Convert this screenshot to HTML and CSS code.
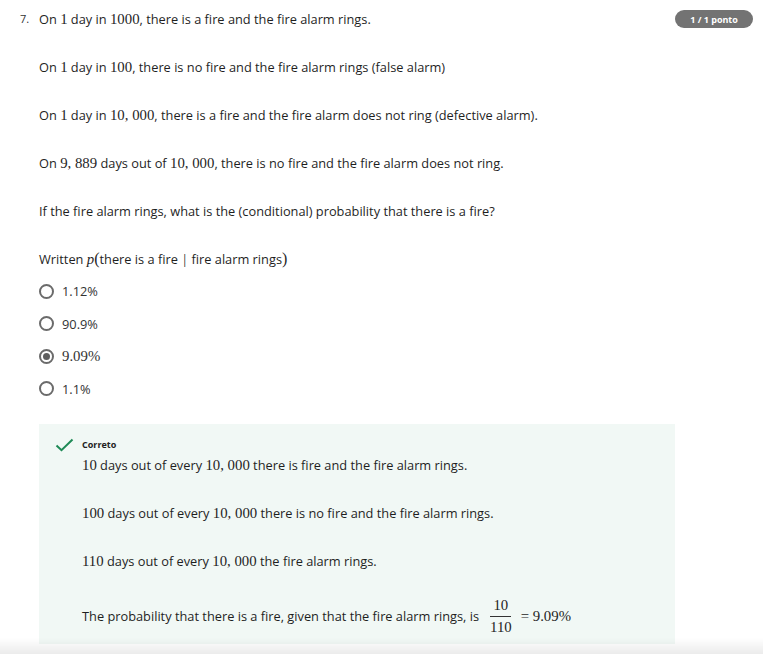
FILE: index.html
```html
<!DOCTYPE html>
<html lang="en">
<head>
<meta charset="utf-8">
<title>Question 7</title>
<link rel="stylesheet" href="styles.css">
</head>
<body>
<div class="question">
  <div class="num">7.</div>
  <div class="content">
    <p>On <span class="m">1</span> day in <span class="m">1000</span>, there is a fire and the fire alarm rings.</p>
    <p>On <span class="m">1</span> day in <span class="m">100</span>, there is no fire and the fire alarm rings (false alarm)</p>
    <p>On <span class="m">1</span> day in <span class="m">10, 000</span>, there is a fire and the fire alarm does not ring (defective alarm).</p>
    <p>On <span class="m">9, 889</span> days out of <span class="m">10, 000</span>, there is no fire and the fire alarm does not ring.</p>
    <p>If the fire alarm rings, what is the (conditional) probability that there is a fire?</p>
    <p class="last">Written <span class="m"><i>p</i><span class="paren">(</span></span>there is a fire <span class="m bar">|</span> fire alarm rings<span class="m paren">)</span></p>
    <div class="options">
      <label class="opt"><span class="radio"></span><span>1.12%</span></label>
      <label class="opt"><span class="radio"></span><span>90.9%</span></label>
      <label class="opt"><span class="radio checked"></span><span class="m">9.09%</span></label>
      <label class="opt"><span class="radio"></span><span>1.1%</span></label>
    </div>
    <div class="feedback">
      <div class="fb-head">
        <svg class="check" width="19" height="14" viewBox="0 0 19 14"><path d="M1.5 7.5 L6.5 12.2 L17.5 1.5" fill="none" stroke="#1e8a56" stroke-width="2"/></svg>
        <span class="fb-title">Correto</span>
      </div>
      <div class="fb-body">
        <p><span class="m">10</span> days out of every <span class="m">10, 000</span> there is fire and the fire alarm rings.</p>
        <p><span class="m">100</span> days out of every <span class="m">10, 000</span> there is no fire and the fire alarm rings.</p>
        <p><span class="m">110</span> days out of every <span class="m">10, 000</span> the fire alarm rings.</p>
        <p class="final">The probability that there is a fire, given that the fire alarm rings, is <span class="frac m"><span class="numr">10</span><span class="den">110</span></span><span class="m eq">= 9.09%</span></p>
      </div>
    </div>
  </div>
  <div class="badge">1 / 1 ponto</div>
</div>
<div class="fade"></div>
</body>
</html>
```

FILE: styles.css
```css
html, body {
  margin: 0;
  padding: 0;
  background: #ffffff;
}
body {
  font-family: "Open Sans", "Liberation Sans", sans-serif;
  font-size: 12.8px;
  color: #1f1f1f;
}
.question {
  display: flex;
  align-items: flex-start;
  padding: 9px 9px 0 20px;
}
.num {
  width: 19px;
  font-size: 11px;
  line-height: 20px;
  color: #333;
}
.content {
  width: 636px;
}
.content p {
  margin: 0 0 28px;
  line-height: 20px;
}
.content p.last {
  margin-bottom: 12px;
}
.m {
  font-family: "Liberation Serif", "DejaVu Serif", serif;
  font-size: 14.8px;
}
.m i {
  font-style: italic;
}
.paren {
  font-size: 16px;
}
.bar {
  margin: 0 2px;
}
.options {
  display: flex;
  flex-direction: column;
  gap: 12.5px;
}
.opt {
  display: flex;
  align-items: center;
  gap: 8px;
  height: 20px;
  color: #333;
}
.radio {
  box-sizing: border-box;
  width: 15px;
  height: 15px;
  border: 2px solid #6b6b6b;
  border-radius: 50%;
  display: flex;
  align-items: center;
  justify-content: center;
}
.radio.checked::after {
  content: "";
  width: 7px;
  height: 7px;
  border-radius: 50%;
  background: #5f5f5f;
}
.feedback {
  margin-top: 25px;
  background: #f1f8f5;
  padding: 13px 16px 6px 16px;
}
.fb-head {
  display: flex;
  align-items: center;
  gap: 8px;
  height: 16px;
}
.check {
  display: block;
}
.fb-title {
  font-size: 9px;
  font-weight: 700;
  color: #222;
}
.fb-body {
  padding-left: 27px;
  padding-top: 2px;
}
.fb-body p {
  margin: 0 0 28px;
  line-height: 20px;
}
.fb-body p.final {
  margin: 0;
  display: flex;
  align-items: center;
  height: 44px;
  margin-top: -5px;
}
.frac {
  display: inline-flex;
  flex-direction: column;
  align-items: center;
  margin-left: 8px;
  line-height: 18px;
}
.numr {
  padding: 0 3px 2px;
  border-bottom: 1px solid #333;
}
.den {
  padding: 1px 3px 0;
}
.eq {
  margin-left: 6px;
}
.badge {
  margin-top: 1px;
  width: 78px;
  height: 18px;
  border-radius: 9px;
  background: #737373;
  color: #fff;
  font-size: 9px;
  font-weight: 700;
  display: flex;
  align-items: center;
  justify-content: center;
}
.fade {
  position: fixed;
  left: 0;
  right: 0;
  bottom: 0;
  height: 16px;
  background: linear-gradient(rgba(0,0,0,0), rgba(0,0,0,0.08));
}
```
